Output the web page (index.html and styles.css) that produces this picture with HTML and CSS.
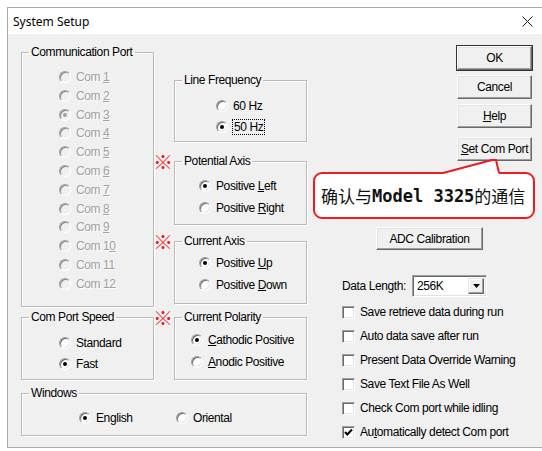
FILE: index.html
```html
<!DOCTYPE html>
<html lang="en">
<head>
<meta charset="utf-8">
<title>System Setup</title>
<link rel="stylesheet" href="styles.css">
</head>
<body>
<div class="window">
  <div class="titlebar">
    <span class="title">System Setup</span>
    <svg class="close" width="11" height="11" viewBox="0 0 11 11"><path d="M0.5 0.5L10.5 10.5M10.5 0.5L0.5 10.5" stroke="#1a1a1a" stroke-width="1" fill="none"/></svg>
  </div>
  <div class="client">
    <div class="groups">
      <div class="top-row">
        <fieldset class="group port">
          <legend>Communication Port</legend>
          <div class="opts port-opts">
            <div class="opt disabled"><span class="radio"></span><span>Com <u>1</u></span></div>
            <div class="opt disabled"><span class="radio"></span><span>Com <u>2</u></span></div>
            <div class="opt disabled"><span class="radio on"></span><span>Com <u>3</u></span></div>
            <div class="opt disabled"><span class="radio"></span><span>Com <u>4</u></span></div>
            <div class="opt disabled"><span class="radio"></span><span>Com <u>5</u></span></div>
            <div class="opt disabled"><span class="radio"></span><span>Com <u>6</u></span></div>
            <div class="opt disabled"><span class="radio"></span><span>Com <u>7</u></span></div>
            <div class="opt disabled"><span class="radio"></span><span>Com <u>8</u></span></div>
            <div class="opt disabled"><span class="radio"></span><span>Com <u>9</u></span></div>
            <div class="opt disabled"><span class="radio"></span><span>Com 1<u>0</u></span></div>
            <div class="opt disabled"><span class="radio"></span><span>Com 11</span></div>
            <div class="opt disabled"><span class="radio"></span><span>Com 12</span></div>
          </div>
        </fieldset>
        <div class="mid-col">
          <fieldset class="group freq">
            <legend>Line Frequency</legend>
            <div class="opts freq-opts">
              <div class="opt"><span class="radio"></span><span>60 Hz</span></div>
              <div class="opt"><span class="radio on"></span><span class="focus">50 Hz</span></div>
            </div>
          </fieldset>
          <fieldset class="group potential">
            <span class="mark">※</span>
            <legend>Potential Axis</legend>
            <div class="opts axis-opts pot-opts">
              <div class="opt"><span class="radio on"></span><span>Positive <u>L</u>eft</span></div>
              <div class="opt"><span class="radio"></span><span>Positive <u>R</u>ight</span></div>
            </div>
          </fieldset>
          <fieldset class="group current">
            <span class="mark">※</span>
            <legend>Current Axis</legend>
            <div class="opts axis-opts cur-opts">
              <div class="opt"><span class="radio on"></span><span>Positive <u>U</u>p</span></div>
              <div class="opt"><span class="radio"></span><span>Positive <u>D</u>own</span></div>
            </div>
          </fieldset>
        </div>
      </div>
      <div class="row2">
        <fieldset class="group speed">
          <legend>Com Port Speed</legend>
          <div class="opts speed-opts">
            <div class="opt"><span class="radio"></span><span>Standard</span></div>
            <div class="opt"><span class="radio on"></span><span>Fast</span></div>
          </div>
        </fieldset>
        <fieldset class="group polarity">
          <span class="mark">※</span>
          <legend>Current Polarity</legend>
          <div class="opts polarity-opts">
            <div class="opt"><span class="radio on"></span><span><u>C</u>athodic Positive</span></div>
            <div class="opt"><span class="radio"></span><span><u>A</u>nodic Positive</span></div>
          </div>
        </fieldset>
      </div>
      <fieldset class="group windows">
        <legend>Windows</legend>
        <div class="win-opts">
          <div class="opt english"><span class="radio on"></span><span>English</span></div>
          <div class="opt"><span class="radio"></span><span>Oriental</span></div>
        </div>
      </fieldset>
    </div>

    <div class="side">
      <div class="btns">
        <button class="btn default">OK</button>
        <button class="btn">Cancel</button>
        <button class="btn"><u>H</u>elp</button>
        <button class="btn setport"><u>S</u>et Com Port</button>
      </div>

      <button class="btn adc">ADC Calibration</button>

      <div class="length-row">
        <span class="length-label">Data Length:</span>
        <div class="combo">
          <span class="combo-value">256K</span>
          <span class="combo-drop"><svg width="7" height="4" viewBox="0 0 7 4"><path d="M0 0H7L3.5 4Z" fill="#000"/></svg></span>
        </div>
      </div>

      <div class="checks">
        <div class="check-row"><span class="chk"></span><span>Save retrieve data during run</span></div>
        <div class="check-row"><span class="chk"></span><span>Auto data save after run</span></div>
        <div class="check-row"><span class="chk"></span><span>Present Data Override Warning</span></div>
        <div class="check-row"><span class="chk"></span><span>Save Text File As Well</span></div>
        <div class="check-row"><span class="chk"></span><span>Check Com port while idling</span></div>
        <div class="check-row"><span class="chk"><svg width="11" height="11" viewBox="0 0 11 11"><path d="M2 5L4.3 7.5L9 2.5" stroke="#000" stroke-width="2" fill="none"/></svg></span><span>Au<u>t</u>omatically detect Com port</span></div>
      </div>

      <!-- note bubble pointing at the Set Com Port button -->
      <div class="bubble">确认与<b class="model">Model 3325</b>的通信</div>
      <svg class="bubble-tail" width="62" height="18" viewBox="0 0 62 18">
        <polygon points="3,15 52,2 56,2 59,15 59,18 3,18" fill="#fff"/>
        <polyline points="3,15 52,2 56,2 59,15" fill="none" stroke="#ee1c1c" stroke-width="2" stroke-linejoin="round"/>
      </svg>
    </div>
  </div>
</div>
</body>
</html>
```

FILE: styles.css
```css
html, body {
  margin: 0;
  padding: 0;
  background: #fff;
}

body {
  font-family: "Liberation Sans", Arial, sans-serif;
  font-size: 12px;
  letter-spacing: -0.4px;
  color: #000;
}

/* dialog frame */
.window {
  margin: 7px 0 0 7px;
  height: 441px;
  box-sizing: border-box;
  border: 1px solid #aaa;
  border-right: none;
  background: #f0f0f0;
  display: flex;
  flex-direction: column;
}

.titlebar {
  height: 26px;
  flex: none;
  background: #fff;
  display: flex;
  align-items: center;
  justify-content: space-between;
  padding: 0 9px 0 5px;
}

.title {
  font-family: "Noto Sans", "Open Sans", sans-serif;
  font-size: 12px;
  letter-spacing: 0;
  color: #000;
}

.close {
  display: block;
}

.client {
  display: flex;
  padding: 11px 0 0 13px;
}

/* left block of option groups */
.groups {
  width: 286px;
  flex: none;
  display: flex;
  flex-direction: column;
}

.top-row {
  display: flex;
  gap: 20px;
  height: 262px;
}

.mid-col {
  width: 133px;
  display: flex;
  flex-direction: column;
  padding-top: 28px;
}

.row2 {
  display: flex;
  gap: 20px;
  margin-top: 3px;
}

.group {
  position: relative;
  margin: 0;
  padding: 0;
  min-width: 0;
  box-sizing: border-box;
  border: 1px solid #b9b9b9;
  box-shadow: 1px 1px 0 #fff, inset 1px 1px 0 #fff;
}

.group legend {
  margin-left: 7px;
  padding: 0 2px;
  line-height: 14px;
  height: 14px;
}

.port { width: 133px; height: 262px; }
.freq { height: 69px; margin-bottom: 12px; }
.potential { height: 71px; margin-bottom: 9px; }
.current { height: 70px; }
.speed { width: 133px; height: 70px; }
.polarity { width: 133px; height: 70px; }
.windows { width: 286px; height: 50px; margin-top: 6px; }

.opts {
  display: flex;
  flex-direction: column;
}

.opt {
  display: flex;
  align-items: center;
  white-space: nowrap;
}

.port-opts { padding: 8.6px 0 0 37px; }
.port-opts .opt { height: 18.8px; }

.freq-opts { padding: 8px 0 0 41px; }
.freq-opts .opt { height: 21px; }

.axis-opts { padding-left: 24px; }
.axis-opts .opt { height: 22px; }
.pot-opts { padding-top: 7px; }
.cur-opts { padding-top: 4px; }

.speed-opts { padding: 8px 0 0 37px; }
.speed-opts .opt { height: 21px; }

.polarity-opts { padding: 5px 0 0 16px; }
.polarity-opts .opt { height: 22px; }

.win-opts {
  display: flex;
  padding: 8px 0 0 57px;
}
.win-opts .opt { height: 20px; }
.win-opts .english { width: 97px; }

.focus {
  outline: 1px dotted #000;
  outline-offset: 0;
  padding: 0 1px;
  line-height: 14px;
}

/* classic 3D radio button */
.radio {
  position: relative;
  flex: none;
  width: 12px;
  height: 12px;
  box-sizing: border-box;
  margin-right: 5px;
  border-radius: 50%;
  border: 1px solid;
  border-color: #a0a0a0 #fff #fff #a0a0a0;
  box-shadow: inset 1px 1px 0 #696969, inset -1px -1px 0 #e3e3e3;
  background: #fff;
}

.radio.on::after {
  content: "";
  position: absolute;
  left: 3px;
  top: 3px;
  width: 4px;
  height: 4px;
  border-radius: 50%;
  background: #000;
}

.disabled {
  color: #a0a0a0;
  text-shadow: 1px 1px 0 #fff;
}

.disabled .radio {
  background: #f0f0f0;
  box-shadow: inset 1px 1px 0 #8a8a8a;
}

.disabled .radio.on::after {
  background: #a0a0a0;
}

/* red reference marks beside groups */
.mark {
  position: absolute;
  left: -22px;
  top: -16px;
  font-family: "Noto Sans CJK SC", sans-serif;
  font-size: 20px;
  font-weight: bold;
  line-height: 20px;
  letter-spacing: 0;
  color: #ee1c1c;
}

/* right side panel */
.side {
  position: relative;
  flex: 1;
  display: flex;
  flex-direction: column;
}

.btns {
  display: flex;
  flex-direction: column;
  align-items: flex-start;
  gap: 5px;
  padding-left: 150px;
  margin-top: 1px;
}

.btn {
  font-family: "Liberation Sans", Arial, sans-serif;
  font-size: 12px;
  letter-spacing: -0.4px;
  color: #000;
  width: 75px;
  height: 24px;
  padding: 0;
  box-sizing: border-box;
  background: #f0f0f0;
  border: 1px solid;
  border-color: #fff #696969 #696969 #fff;
  box-shadow: inset -1px -1px 0 #a0a0a0, inset 1px 1px 0 #e3e3e3;
  border-radius: 0;
}

.btn.default {
  outline: 1px solid #333;
  outline-offset: 0;
}

.btn.setport {
  margin-top: 4px;
}

.btn.adc {
  width: 107px;
  height: 23px;
  margin: 66px 0 0 69px;
  align-self: flex-start;
}

.length-row {
  display: flex;
  align-items: center;
  margin-top: 25px;
  padding-left: 35px;
  height: 22px;
}

.length-label {
  width: 70px;
}

.combo {
  width: 75px;
  height: 22px;
  box-sizing: border-box;
  display: flex;
  align-items: center;
  justify-content: space-between;
  background: #fff;
  border: 1px solid;
  border-color: #a0a0a0 #fff #fff #a0a0a0;
  box-shadow: inset 1px 1px 0 #696969, inset -1px -1px 0 #e3e3e3;
  padding: 2px 2px 2px 4px;
}

.combo-drop {
  width: 16px;
  height: 16px;
  box-sizing: border-box;
  display: flex;
  align-items: center;
  justify-content: center;
  background: #f0f0f0;
  border: 1px solid;
  border-color: #e3e3e3 #696969 #696969 #e3e3e3;
  box-shadow: inset -1px -1px 0 #a0a0a0, inset 1px 1px 0 #fff;
}

.combo-drop svg { display: block; }

.checks {
  display: flex;
  flex-direction: column;
  margin-top: 3px;
  padding-left: 35px;
}

.check-row {
  display: flex;
  align-items: center;
  height: 24px;
  white-space: nowrap;
}

.chk {
  flex: none;
  width: 13px;
  height: 13px;
  box-sizing: border-box;
  margin-right: 5px;
  border: 1px solid;
  border-color: #a0a0a0 #fff #fff #a0a0a0;
  box-shadow: inset 1px 1px 0 #696969, inset -1px -1px 0 #e3e3e3;
  background: #fff;
  display: flex;
  align-items: center;
  justify-content: center;
}

.chk svg { display: block; }

/* note bubble */
.bubble {
  position: absolute;
  left: 6px;
  top: 127px;
  width: 222px;
  height: 47px;
  box-sizing: border-box;
  border: 2px solid #ee1c1c;
  border-radius: 9px;
  background: #fff;
  display: flex;
  align-items: center;
  padding-left: 6px;
  font-family: "Noto Sans CJK SC", sans-serif;
  font-size: 17px;
  letter-spacing: 0;
  color: #111;
  white-space: nowrap;
}

.model {
  font-family: "DejaVu Sans Mono", "Liberation Mono", monospace;
  font-weight: bold;
  font-size: 17px;
}

.bubble-tail {
  position: absolute;
  left: 133px;
  top: 113px;
  display: block;
}
```
